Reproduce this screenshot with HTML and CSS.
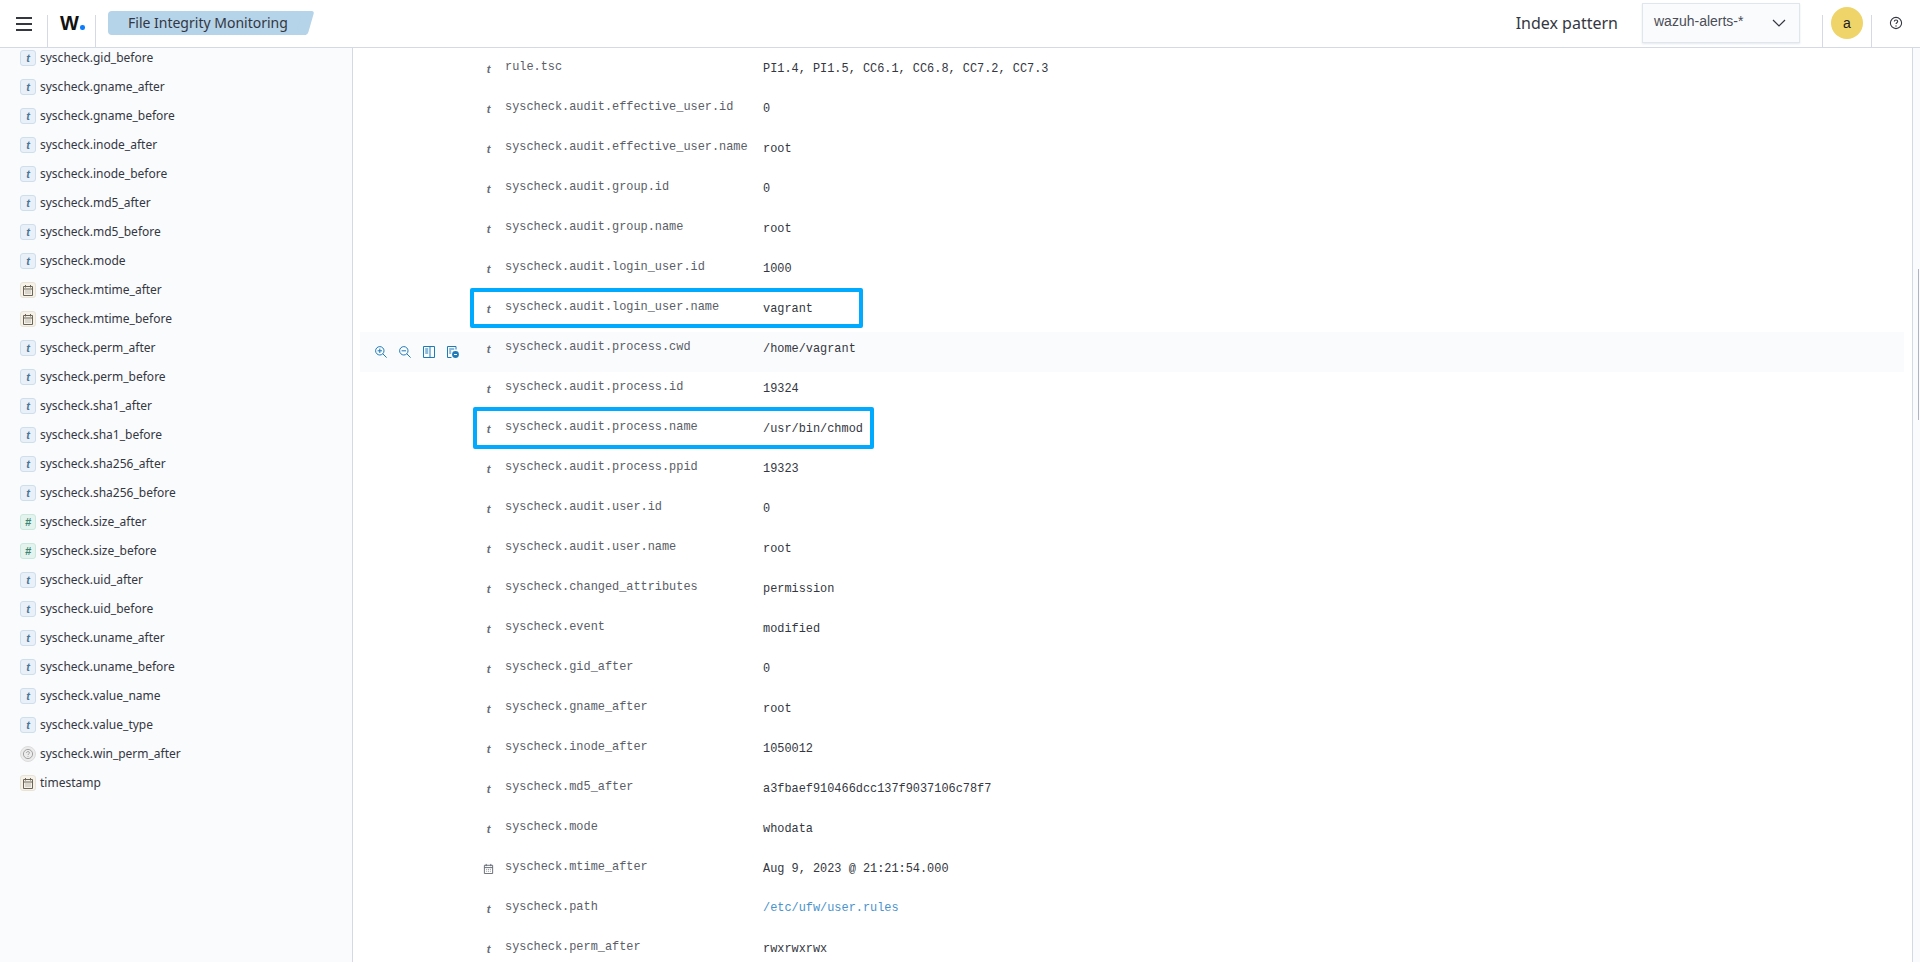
FILE: index.html
```html
<!DOCTYPE html>
<html lang="en">
<head>
<meta charset="utf-8">
<title>File Integrity Monitoring</title>
<link rel="stylesheet" href="styles.css">
</head>
<body>
<svg class="defs" width="0" height="0" aria-hidden="true">
  <symbol id="cal" viewBox="0 0 12 12">
    <path d="M1.5 2.5h9v9h-9zM1.5 5h9M3.5 1v2.5M8.5 1v2.5" fill="none" stroke="currentColor"/>
    <path d="M3.5 7h1M5.5 7h1M7.5 7h1M3.5 9h1M5.5 9h1M7.5 9h1" fill="none" stroke="currentColor" stroke-width=".8"/>
  </symbol>
</svg>
<header class="topbar">
  <button class="burger" aria-label="Menu"><span></span><span></span><span></span></button>
  <div class="logo-cell"><span class="logo">W<i class="logo-dot"></i></span></div>
  <div class="crumb">File Integrity Monitoring</div>
  <div class="top-right">
    <span class="ip-label">Index pattern</span>
    <div class="ip-select">
      <span>wazuh-alerts-*</span>
      <svg class="chev" width="14" height="8" viewBox="0 0 14 8"><path d="M1 1l6 6 6-6" fill="none" stroke="#343741" stroke-width="1.2"/></svg>
    </div>
    <div class="avatar-cell"><span class="avatar">a</span></div>
    <div class="help-cell">
      <svg width="14" height="14" viewBox="0 0 14 14"><circle cx="7" cy="7" r="5.6" fill="none" stroke="#343741" stroke-width="1.1"/><path d="M5.3 5.6c0-1 .8-1.6 1.7-1.6s1.7.6 1.7 1.5c0 1.2-1.7 1.3-1.7 2.6" fill="none" stroke="#343741" stroke-width="1.1"/><circle cx="7" cy="10" r=".7" fill="#343741"/></svg>
    </div>
  </div>
</header>
<div class="body-row">
  <aside class="sidebar">
    <ul class="fields">
      <li class="field"><span class="badge b-t">t</span>syscheck.gid_before</li>
      <li class="field"><span class="badge b-t">t</span>syscheck.gname_after</li>
      <li class="field"><span class="badge b-t">t</span>syscheck.gname_before</li>
      <li class="field"><span class="badge b-t">t</span>syscheck.inode_after</li>
      <li class="field"><span class="badge b-t">t</span>syscheck.inode_before</li>
      <li class="field"><span class="badge b-t">t</span>syscheck.md5_after</li>
      <li class="field"><span class="badge b-t">t</span>syscheck.md5_before</li>
      <li class="field"><span class="badge b-t">t</span>syscheck.mode</li>
      <li class="field"><span class="badge b-d"><svg width="12" height="12"><use href="#cal"/></svg></span>syscheck.mtime_after</li>
      <li class="field"><span class="badge b-d"><svg width="12" height="12"><use href="#cal"/></svg></span>syscheck.mtime_before</li>
      <li class="field"><span class="badge b-t">t</span>syscheck.perm_after</li>
      <li class="field"><span class="badge b-t">t</span>syscheck.perm_before</li>
      <li class="field"><span class="badge b-t">t</span>syscheck.sha1_after</li>
      <li class="field"><span class="badge b-t">t</span>syscheck.sha1_before</li>
      <li class="field"><span class="badge b-t">t</span>syscheck.sha256_after</li>
      <li class="field"><span class="badge b-t">t</span>syscheck.sha256_before</li>
      <li class="field"><span class="badge b-n">#</span>syscheck.size_after</li>
      <li class="field"><span class="badge b-n">#</span>syscheck.size_before</li>
      <li class="field"><span class="badge b-t">t</span>syscheck.uid_after</li>
      <li class="field"><span class="badge b-t">t</span>syscheck.uid_before</li>
      <li class="field"><span class="badge b-t">t</span>syscheck.uname_after</li>
      <li class="field"><span class="badge b-t">t</span>syscheck.uname_before</li>
      <li class="field"><span class="badge b-t">t</span>syscheck.value_name</li>
      <li class="field"><span class="badge b-t">t</span>syscheck.value_type</li>
      <li class="field"><span class="badge b-u"><svg width="12" height="12" viewBox="0 0 12 12"><circle cx="6" cy="6" r="4.6" fill="none" stroke="#8f8f8f" stroke-width=".8"/><path d="M4.5 4.9c0-.9.7-1.3 1.5-1.3s1.5.4 1.5 1.2c0 1-1.5 1.1-1.5 2.2M6 8v.8" fill="none" stroke="#8f8f8f" stroke-width=".8"/></svg></span>syscheck.win_perm_after</li>
      <li class="field"><span class="badge b-d"><svg width="12" height="12"><use href="#cal"/></svg></span>timestamp</li>
    </ul>
  </aside>
  <main class="doc">
    <div class="row"><span></span><span class="ty">t</span><span class="key">rule.tsc</span><span class="val">PI1.4, PI1.5, CC6.1, CC6.8, CC7.2, CC7.3</span></div>
    <div class="row"><span></span><span class="ty">t</span><span class="key">syscheck.audit.effective_user.id</span><span class="val">0</span></div>
    <div class="row"><span></span><span class="ty">t</span><span class="key">syscheck.audit.effective_user.name</span><span class="val">root</span></div>
    <div class="row"><span></span><span class="ty">t</span><span class="key">syscheck.audit.group.id</span><span class="val">0</span></div>
    <div class="row"><span></span><span class="ty">t</span><span class="key">syscheck.audit.group.name</span><span class="val">root</span></div>
    <div class="row"><span></span><span class="ty">t</span><span class="key">syscheck.audit.login_user.id</span><span class="val">1000</span></div>
    <div class="row"><span></span><span class="ty">t</span><span class="key">syscheck.audit.login_user.name</span><span class="val">vagrant</span><div class="mark mark-a"></div></div>
    <div class="row row-hover">
      <span class="acts">
        <svg width="12" height="12" viewBox="0 0 12 12"><circle cx="4.8" cy="4.8" r="4.2" fill="none" stroke="#1f7ab8"/><path d="M7.8 7.8L11.6 11.6M2.6 4.8h4.4M4.8 2.6v4.4" fill="none" stroke="#1f7ab8"/></svg>
        <svg width="12" height="12" viewBox="0 0 12 12"><circle cx="4.8" cy="4.8" r="4.2" fill="none" stroke="#1f7ab8"/><path d="M7.8 7.8L11.6 11.6M2.6 4.8h4.4" fill="none" stroke="#1f7ab8"/></svg>
        <svg width="12" height="12" viewBox="0 0 12 12"><path d="M.5.5h11v11H.5zM7 .5v11M2.2 3h3M2.2 5h3M2.2 7h3" fill="none" stroke="#1f7ab8"/></svg>
        <svg width="12" height="12" viewBox="0 0 12 12"><path d="M.5.5h8.5v3M.5.5v11h4M2.2 3h5M2.2 5h2M2.2 7h2" fill="none" stroke="#1f7ab8"/><circle cx="8.5" cy="8.5" r="3.4" fill="#1f7ab8"/><path d="M7 8.5h3" stroke="#fff"/></svg>
      </span>
      <span class="ty">t</span><span class="key">syscheck.audit.process.cwd</span><span class="val">/home/vagrant</span>
    </div>
    <div class="row"><span></span><span class="ty">t</span><span class="key">syscheck.audit.process.id</span><span class="val">19324</span></div>
    <div class="row"><span></span><span class="ty">t</span><span class="key">syscheck.audit.process.name</span><span class="val">/usr/bin/chmod</span><div class="mark mark-b"></div></div>
    <div class="row"><span></span><span class="ty">t</span><span class="key">syscheck.audit.process.ppid</span><span class="val">19323</span></div>
    <div class="row"><span></span><span class="ty">t</span><span class="key">syscheck.audit.user.id</span><span class="val">0</span></div>
    <div class="row"><span></span><span class="ty">t</span><span class="key">syscheck.audit.user.name</span><span class="val">root</span></div>
    <div class="row"><span></span><span class="ty">t</span><span class="key">syscheck.changed_attributes</span><span class="val">permission</span></div>
    <div class="row"><span></span><span class="ty">t</span><span class="key">syscheck.event</span><span class="val">modified</span></div>
    <div class="row"><span></span><span class="ty">t</span><span class="key">syscheck.gid_after</span><span class="val">0</span></div>
    <div class="row"><span></span><span class="ty">t</span><span class="key">syscheck.gname_after</span><span class="val">root</span></div>
    <div class="row"><span></span><span class="ty">t</span><span class="key">syscheck.inode_after</span><span class="val">1050012</span></div>
    <div class="row"><span></span><span class="ty">t</span><span class="key">syscheck.md5_after</span><span class="val">a3fbaef910466dcc137f9037106c78f7</span></div>
    <div class="row"><span></span><span class="ty">t</span><span class="key">syscheck.mode</span><span class="val">whodata</span></div>
    <div class="row"><span></span><span class="ty ty-d"><svg width="11" height="11"><use href="#cal"/></svg></span><span class="key">syscheck.mtime_after</span><span class="val">Aug 9, 2023 @ 21:21:54.000</span></div>
    <div class="row"><span></span><span class="ty">t</span><span class="key">syscheck.path</span><span class="val val-link">/etc/ufw/user.rules</span></div>
    <div class="row"><span></span><span class="ty">t</span><span class="key">syscheck.perm_after</span><span class="val">rwxrwxrwx</span></div>
  </main>
  <div class="rail"><span class="thumb"></span></div>
</div>
</body>
</html>
```
FILE: styles.css
```css
* { box-sizing: border-box; }
html, body { margin: 0; height: 100%; overflow: hidden; background: #fff; }
body { display: flex; flex-direction: column; font-family: "Noto Sans", sans-serif; color: #343741; }
.defs { position: absolute; }

.topbar { flex: 0 0 48px; display: flex; align-items: stretch; border-bottom: 1px solid #d3dae6; background: #fff; }
.burger { width: 48px; padding: 2px 15px 0 16px; margin-top: 15px; background: none; border: 0; border-right: 1px solid #d3dae6; display: flex; flex-direction: column; justify-content: flex-start; gap: 4px; }
.burger span { display: block; height: 2px; background: #343741; }
.logo-cell { width: 48px; margin-top: 15px; border-right: 1px solid #d3dae6; padding-left: 12px; }
.logo { display: block; font: 700 20px/20px "Liberation Sans", sans-serif; color: #111; margin-top: -2px; position: relative; }
.logo-dot { position: absolute; left: 20px; top: 12px; width: 4.5px; height: 4.5px; border-radius: 50%; background: #0a7cff; }
.crumb { position: relative; isolation: isolate; margin: 11px 0 0 12px; height: 24px; width: 198px; padding-left: 20px; background: #b5d3e9; border-radius: 4px 0 0 4px; font-size: 14px; line-height: 23px; color: #343741; white-space: nowrap; }
.crumb::after { content: ""; position: absolute; right: -5px; top: 0; bottom: 0; width: 12px; background: #b5d3e9; border-radius: 0 3px 3px 0; transform: skewX(-16deg); z-index: -1; }
.top-right { margin-left: auto; display: flex; align-items: stretch; }
.ip-label { font-size: 16px; line-height: 46px; margin-right: 24px; color: #343741; }
.ip-select { width: 158px; height: 40px; margin-top: 3px; padding: 0 13px 0 11px; display: flex; align-items: center; justify-content: space-between; background: #fafbfd; border: 1px solid #e0e5ee; box-shadow: 0 1px 2px rgba(152,162,179,.25); font: 14px "Liberation Sans", sans-serif; color: #4a4d57; }
.ip-select span { margin-top: -4px; }
.avatar-cell { width: 50px; margin: 15px 0 0 22px; border-left: 1px solid #d3dae6; border-right: 1px solid #d3dae6; position: relative; }
.avatar { position: absolute; left: 8px; top: -8px; width: 32px; height: 32px; border-radius: 50%; background: #efd469; font: 14px/32px "Liberation Sans", sans-serif; text-align: center; color: #1a1c21; }
.help-cell { width: 48px; display: flex; justify-content: center; padding: 16px 2px 0 1px; }

.body-row { flex: 1; min-height: 0; display: flex; }
.sidebar { flex: 0 0 353px; background: #fafbfd; border-right: 1px solid #d3dae6; overflow: hidden; }
.fields { list-style: none; margin: -5px 0 0; padding: 0 0 0 20px; }
.field { height: 29px; display: flex; align-items: center; gap: 4px; font-size: 12px; color: #343741; white-space: nowrap; }
.badge { flex: 0 0 16px; height: 16px; border-radius: 3px; border: 1px solid; display: flex; align-items: center; justify-content: center; font: italic 700 11px/14px "Liberation Sans", sans-serif; }
.b-t { background: #e9f0f8; border-color: #cfdeec; color: #4a7496; }
.b-n { background: #e4f3ee; border-color: #cae8de; color: #3b8570; }
.b-d { background: #f6f2ea; border-color: #e9e3d5; color: #6b6558; }
.b-u { background: #ececec; border-color: #dcdcdc; border-radius: 50%; }

.doc { flex: 1; min-width: 0; padding: 4px 8px 0 7px; overflow: hidden; }
.row { position: relative; height: 40px; display: grid; grid-template-columns: 112px 33px 258px 1fr; font: 11.9px/14px "Liberation Mono", monospace; }
.row-hover { background: #fafbfd; }
.acts { display: flex; gap: 12px; padding: 14px 0 0 15px; }
.ty { padding-top: 10px; text-align: center; font: italic 700 11px/14px "Liberation Sans", sans-serif; color: #666b75; }
.ty-d { color: #5f6570; padding-top: 11px; }
.key { padding-top: 8px; color: #5a5e68; white-space: nowrap; }
.val { padding-top: 9.5px; color: #343741; white-space: nowrap; }
.val-link { padding-top: 8.5px; color: #4a93cc; }
.mark { position: absolute; border: 4px solid #00aaff; border-radius: 2px; pointer-events: none; }
.mark-a { left: 110px; top: -4px; width: 393px; height: 40px; }
.mark-b { left: 113px; top: -5px; width: 401px; height: 42px; }

.rail { flex: 0 0 8px; position: relative; background: #fafbfd; border-left: 1px solid #d3dae6; }
.thumb { position: absolute; right: 1px; top: 221px; width: 1.5px; height: 151px; background: #b0b3c2; }
```
